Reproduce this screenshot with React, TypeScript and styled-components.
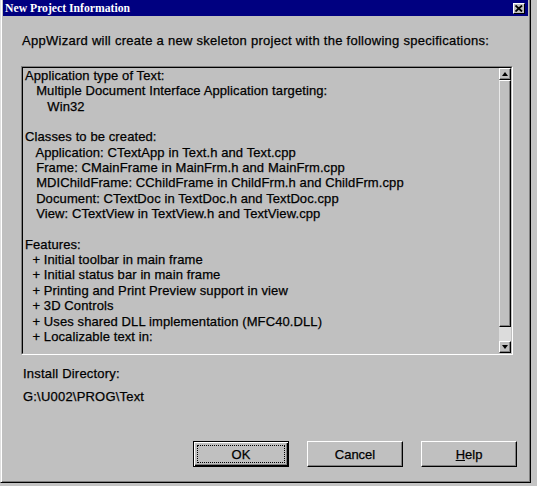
import React from 'react'
import styled, { createGlobalStyle } from 'styled-components'

const GlobalStyle = createGlobalStyle`
  body {
    margin: 0;
    background: #c4c4c4;
    font-family: "Liberation Sans", Arial, sans-serif;
  }
`

const Window = styled.div`
  width: 531px;
  height: 483px;
  box-sizing: border-box;
  background: #c0c0c0;
  border-style: solid;
  border-width: 0 1px 1px 1px;
  border-color: #dfdfdf #000 #000 #dfdfdf;
  box-shadow: inset 1px 0 0 #fff, inset -1px -1px 0 #808080;
  padding: 0 2px 2px 1px;
  display: flex;
  flex-direction: column;
`

const TitleBar = styled.div`
  height: 16px;
  background: #000080;
  display: flex;
  align-items: center;
  justify-content: space-between;
  padding: 0 3px 0 2px;
  margin-left: 1px;
`

const Title = styled.span`
  color: #fff;
  font-family: "Liberation Serif", "Times New Roman", serif;
  font-weight: bold;
  font-size: 11.7px;
`

const CloseButton = styled.div`
  width: 12px;
  height: 11px;
  box-sizing: border-box;
  background: #c0c0c0;
  border-style: solid;
  border-width: 1px;
  border-color: #fff #000 #000 #fff;
  display: flex;
  align-items: center;
  justify-content: center;
`

const Body = styled.div`
  flex: 1;
  display: flex;
  flex-direction: column;
  padding: 0 0 0 19px;
  font-size: 13px;
  color: #000;
  -webkit-text-stroke: 0.25px #000;
`

const Intro = styled.div`
  margin-top: 17px;
  margin-left: 1px;
  line-height: 15px;
  letter-spacing: 0.27px;
`

const ListBox = styled.div`
  margin-top: 18px;
  width: 492px;
  height: 289px;
  box-sizing: border-box;
  border-style: solid;
  border-width: 1px;
  border-color: #808080 #fff #fff #808080;
  display: flex;
`

const ListInner = styled.div`
  flex: 1;
  display: flex;
  border-style: solid;
  border-width: 1px;
  border-color: #000 #c0c0c0 #c0c0c0 #000;
  background: #c0c0c0;
`

const ListText = styled.div`
  flex: 1;
  white-space: pre;
  line-height: 15.35px;
  padding: 0 0 0 2px;
  overflow: hidden;
  letter-spacing: 0.1px;
`

const ScrollBar = styled.div`
  width: 12px;
  display: flex;
  flex-direction: column;
  background: #dcdcdc;
`

const Arrow = styled.div`
  height: 12px;
  box-sizing: border-box;
  background: #c0c0c0;
  border-style: solid;
  border-width: 1px;
  border-color: #fff #000 #000 #fff;
  box-shadow: inset -1px -1px 0 #808080;
  display: flex;
  align-items: center;
  justify-content: center;
`

const Thumb = styled.div<{ $size: number }>`
  height: ${(p) => p.$size}px;
  box-sizing: border-box;
  background: #c0c0c0;
  border-style: solid;
  border-width: 1px;
  border-color: #fff #000 #000 #e8e8e8;
  box-shadow: inset -1px -1px 0 #808080;
`

const Track = styled.div`
  flex: 1;
`

const Label = styled.div<{ $top: number }>`
  margin-top: ${(p) => p.$top}px;
  margin-left: 2px;
  line-height: 15px;
  letter-spacing: 0.2px;
`

const ButtonRow = styled.div`
  display: flex;
  gap: 18px;
  margin-top: 37px;
  margin-left: 172px;
`

const Button = styled.div<{ $default?: boolean }>`
  width: 96px;
  height: 26px;
  box-sizing: border-box;
  background: #c0c0c0;
  border-style: solid;
  border-width: 1px;
  border-color: ${(p) => (p.$default ? '#000' : '#fff #000 #000 #fff')};
  box-shadow: ${(p) =>
    p.$default
      ? 'inset 1px 1px 0 #fff, inset -1px -1px 0 #000, inset -2px -2px 0 #808080'
      : 'inset -1px -1px 0 #808080'};
  display: flex;
  align-items: center;
  justify-content: center;
  position: relative;
  font-size: 13px;
  u {
    text-decoration: underline;
  }
`

const Focus = styled.div`
  position: absolute;
  inset: 3px;
  border: 1px dotted #000;
`

const listLines = `Application type of Text:
   Multiple Document Interface Application targeting:
      Win32

Classes to be created:
   Application: CTextApp in Text.h and Text.cpp
   Frame: CMainFrame in MainFrm.h and MainFrm.cpp
   MDIChildFrame: CChildFrame in ChildFrm.h and ChildFrm.cpp
   Document: CTextDoc in TextDoc.h and TextDoc.cpp
   View: CTextView in TextView.h and TextView.cpp

Features:
  + Initial toolbar in main frame
  + Initial status bar in main frame
  + Printing and Print Preview support in view
  + 3D Controls
  + Uses shared DLL implementation (MFC40.DLL)
  + Localizable text in:`

export default function App() {
  return (
    <>
      <GlobalStyle />
      <Window>
        <TitleBar>
          <Title>New Project Information</Title>
          <CloseButton>
            <svg width="8" height="7" viewBox="0 0 8 7">
              <path d="M0.5 0.5 L7 6.5 M7 0.5 L0.5 6.5" stroke="#000" strokeWidth="1.8" />
            </svg>
          </CloseButton>
        </TitleBar>
        <Body>
          <Intro>AppWizard will create a new skeleton project with the following specifications:</Intro>
          <ListBox>
            <ListInner>
              <ListText>{listLines}</ListText>
              <ScrollBar>
                <Arrow>
                  <svg width="6" height="4" viewBox="0 0 6 4">
                    <path d="M3 0 L6 4 L0 4 Z" fill="#000" />
                  </svg>
                </Arrow>
                <Thumb $size={247} />
                <Track />
                <Arrow>
                  <svg width="6" height="4" viewBox="0 0 6 4">
                    <path d="M0 0 L6 0 L3 4 Z" fill="#000" />
                  </svg>
                </Arrow>
              </ScrollBar>
            </ListInner>
          </ListBox>
          <Label $top={11}>Install Directory:</Label>
          <Label $top={8}>G:\U002\PROG\Text</Label>
          <ButtonRow>
            <Button $default>
              OK
              <Focus />
            </Button>
            <Button>Cancel</Button>
            <Button>
              <span>
                <u>H</u>elp
              </span>
            </Button>
          </ButtonRow>
        </Body>
      </Window>
    </>
  )
}
